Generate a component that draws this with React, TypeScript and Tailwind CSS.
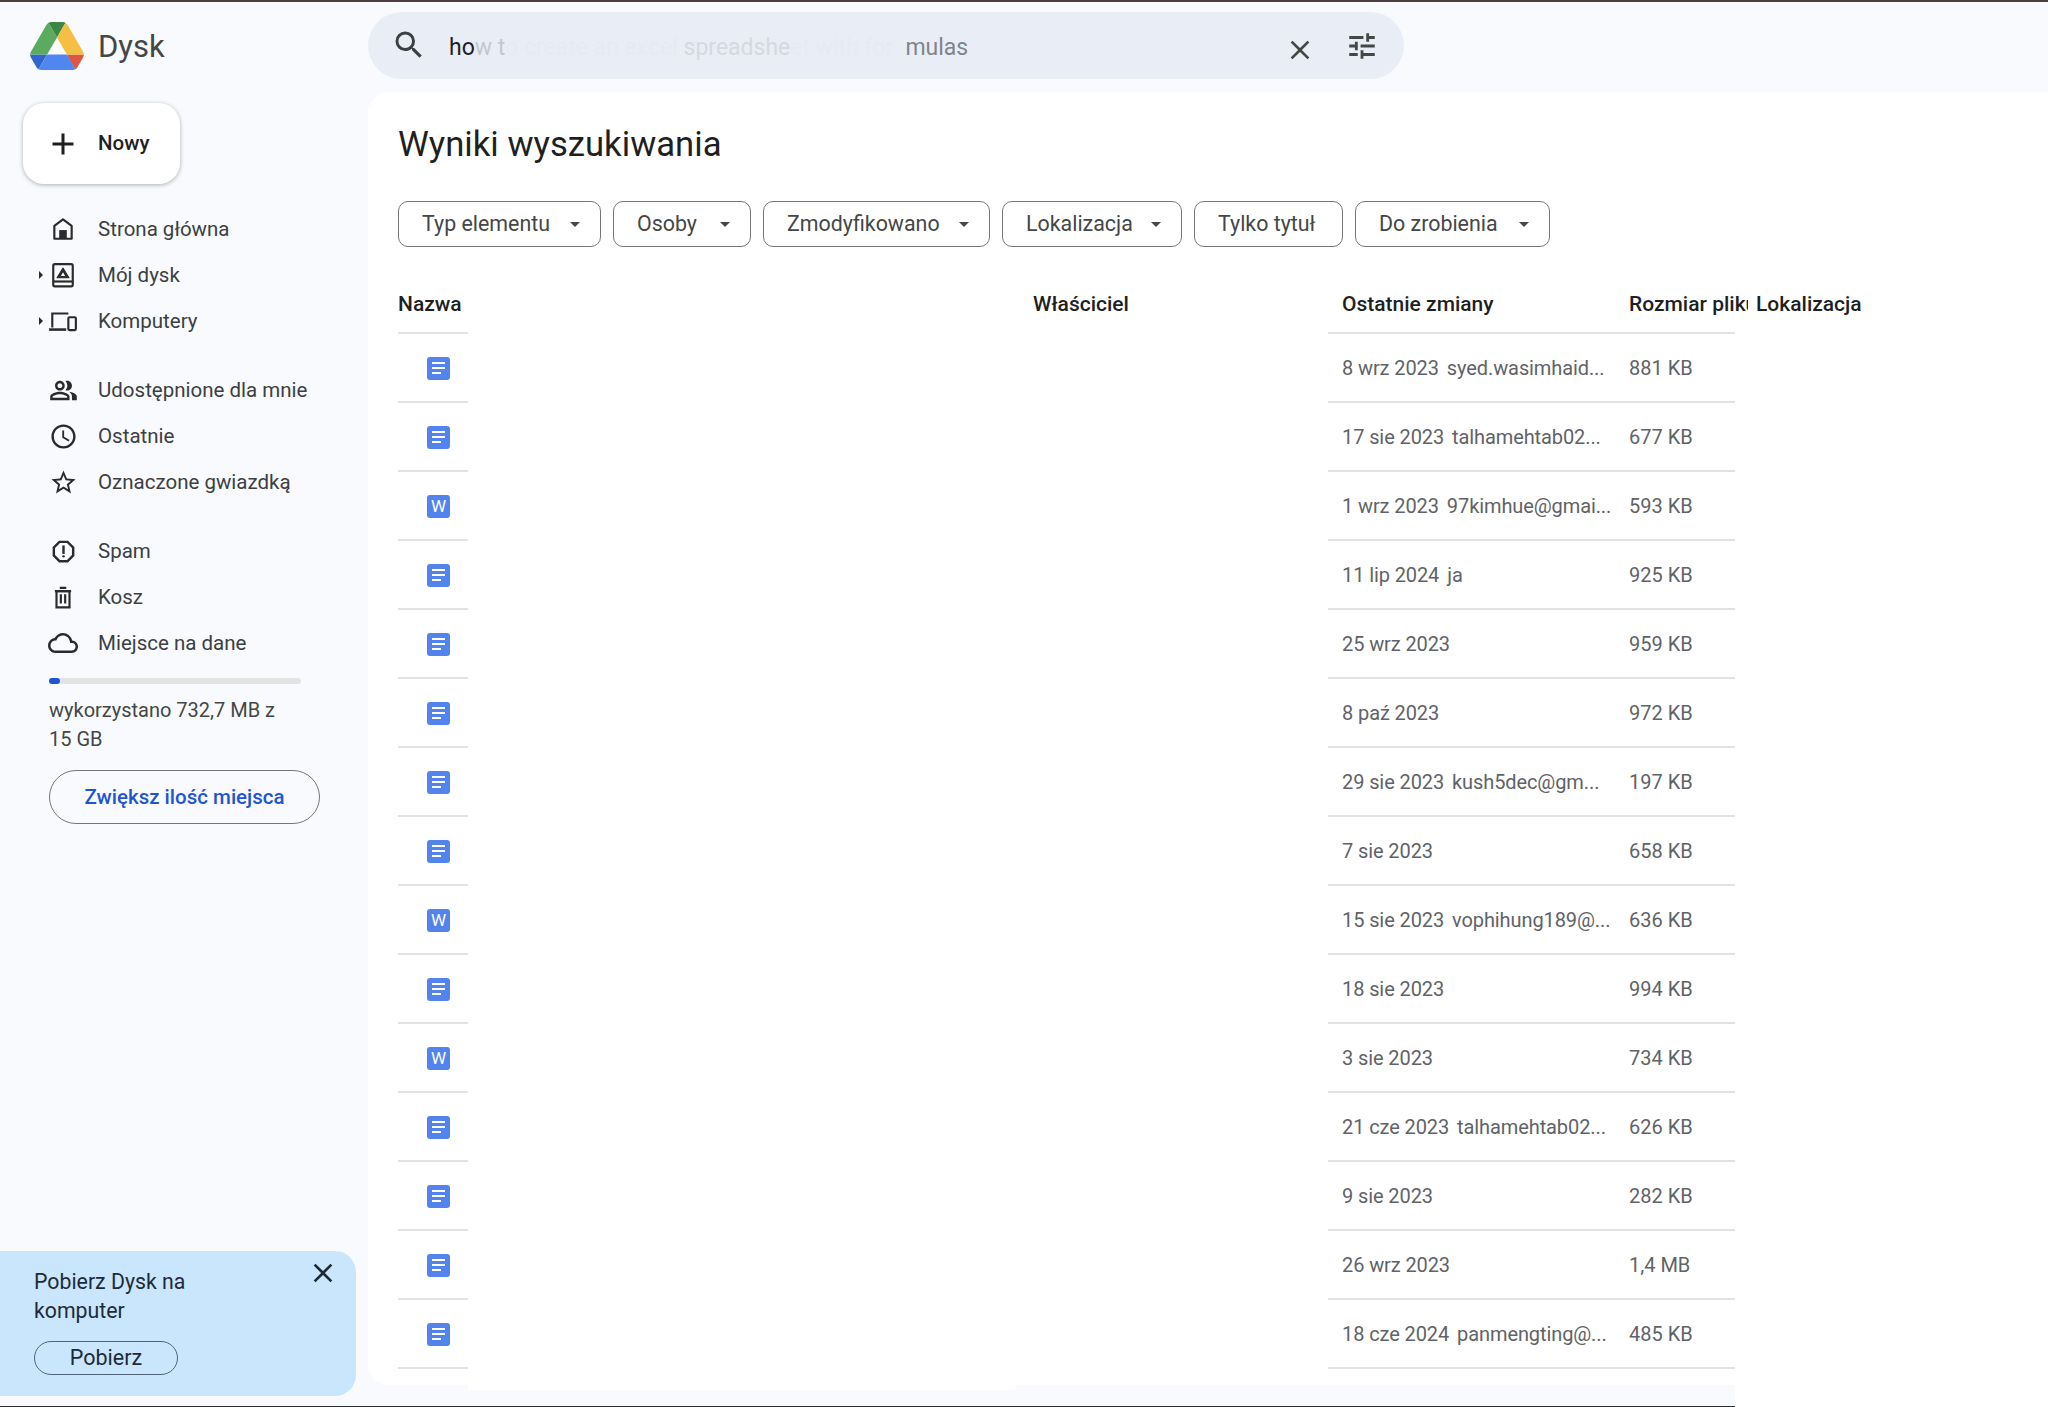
import { MdAdd, MdClose, MdOutlineAccessTime, MdOutlineCloud, MdOutlinePeopleAlt, MdOutlineReport, MdSearch, MdStarBorder, MdTune } from 'react-icons/md';
import React from 'react';

const FONT = "font-['Roboto','Liberation_Sans',sans-serif]";

const FILES = [
  { type: 'doc', date: '8 wrz 2023', owner: 'syed.wasimhaid...', size: '881 KB' },
  { type: 'doc', date: '17 sie 2023', owner: 'talhamehtab02...', size: '677 KB' },
  { type: 'word', date: '1 wrz 2023', owner: '97kimhue@gmai...', size: '593 KB' },
  { type: 'doc', date: '11 lip 2024', owner: 'ja', size: '925 KB' },
  { type: 'doc', date: '25 wrz 2023', owner: '', size: '959 KB' },
  { type: 'doc', date: '8 paź 2023', owner: '', size: '972 KB' },
  { type: 'doc', date: '29 sie 2023', owner: 'kush5dec@gm...', size: '197 KB' },
  { type: 'doc', date: '7 sie 2023', owner: '', size: '658 KB' },
  { type: 'word', date: '15 sie 2023', owner: 'vophihung189@...', size: '636 KB' },
  { type: 'doc', date: '18 sie 2023', owner: '', size: '994 KB' },
  { type: 'word', date: '3 sie 2023', owner: '', size: '734 KB' },
  { type: 'doc', date: '21 cze 2023', owner: 'talhamehtab02...', size: '626 KB' },
  { type: 'doc', date: '9 sie 2023', owner: '', size: '282 KB' },
  { type: 'doc', date: '26 wrz 2023', owner: '', size: '1,4 MB' },
  { type: 'doc', date: '18 cze 2024', owner: 'panmengting@...', size: '485 KB' },
];

const CHIPS = [
  { label: 'Typ elementu', w: 'w-[203px]', arrow: true },
  { label: 'Osoby', w: 'w-[138px]', arrow: true },
  { label: 'Zmodyfikowano', w: 'w-[227px]', arrow: true },
  { label: 'Lokalizacja', w: 'w-[180px]', arrow: true },
  { label: 'Tylko tytuł', w: 'w-[149px]', arrow: false },
  { label: 'Do zrobienia', w: 'w-[195px]', arrow: true },
];

function DriveLogo() {
  return (
    <svg width="54" height="48" viewBox="0 0 87.3 78">
      <path d="m6.6 66.85 3.85 6.65c.8 1.4 1.95 2.5 3.3 3.3l13.75-23.8h-27.5c0 1.55.4 3.1 1.2 4.5z" fill="#3065d0" />
      <path d="m43.65 25-13.75-23.8c-1.35.8-2.5 1.9-3.3 3.3l-25.4 44a9.06 9.06 0 0 0 -1.2 4.5h27.5z" fill="#5aab5f" />
      <path d="m73.55 76.8c1.35-.8 2.5-1.9 3.3-3.3l1.6-2.75 7.65-13.25c.8-1.4 1.2-2.95 1.2-4.5h-27.502l5.852 11.5z" fill="#de5642" />
      <path d="m43.65 25 13.75-23.8c-1.35-.8-2.9-1.2-4.5-1.2h-18.5c-1.6 0-3.15.45-4.5 1.2z" fill="#3b8746" />
      <path d="m59.8 53h-32.3l-13.75 23.8c1.35.8 2.9 1.2 4.5 1.2h50.8c1.6 0 3.15-.45 4.5-1.2z" fill="#5086f0" />
      <path d="m73.4 26.5-12.7-22c-.8-1.4-1.95-2.5-3.3-3.3l-13.75 23.8 16.15 28h27.45c0-1.55-.4-3.1-1.2-4.5z" fill="#f4bf42" />
    </svg>
  );
}

function HomeIcon() {
  return (
    <svg width="26" height="26" viewBox="0 0 24 24" fill="none">
      <path d="M12 3.2 4 9.2V21h16V9.2z" stroke="#2b2b2b" strokeWidth="2" strokeLinejoin="round" />
      <rect x="8.5" y="13" width="7" height="8" fill="#2b2b2b" />
    </svg>
  );
}

function MyDriveIcon() {
  return (
    <svg width="26" height="26" viewBox="0 0 24 24" fill="none">
      <rect x="3" y="2" width="18" height="20.5" rx="1.5" stroke="#2b2b2b" strokeWidth="2" />
      <path d="M3 18h18" stroke="#2b2b2b" strokeWidth="2" />
      <path d="M12 5.5 6.5 14.5h11z" fill="#2b2b2b" stroke="#2b2b2b" strokeLinejoin="round" />
      <path d="M12 9.5 10 13h4z" fill="#f8fafd" />
    </svg>
  );
}

function ComputersIcon() {
  return (
    <svg width="30" height="26" viewBox="0 0 28 24" fill="none">
      <path d="M4 18V5h15" stroke="#2b2b2b" strokeWidth="2" />
      <path d="M1 20h16" stroke="#2b2b2b" strokeWidth="2.4" />
      <rect x="19" y="8.5" width="7" height="12" rx="1" stroke="#2b2b2b" strokeWidth="2" />
    </svg>
  );
}

function TrashIcon() {
  return (
    <svg width="26" height="26" viewBox="0 0 24 24" fill="none">
      <path d="M4.5 6.5h15M9 3.5h6" stroke="#2b2b2b" strokeWidth="2" />
      <path d="M6 6.5h12V21.5H6z" stroke="#2b2b2b" strokeWidth="2" />
      <path d="M10 9.5v8.5M14 9.5v8.5" stroke="#2b2b2b" strokeWidth="2" />
    </svg>
  );
}

function Caret() {
  return <span className="w-0 h-0 border-x-[5px] border-x-transparent border-t-[5px] border-t-[#444746]" />;
}

function NavItem({ icon, label, caret, className = '' }: { icon: React.ReactNode; label: string; caret?: boolean; className?: string }) {
  return (
    <div className={`flex items-center h-[46px] ${className}`}>
      <span className="w-[48px] pl-[39px] shrink-0 flex">
        {caret && <span className="w-0 h-0 border-y-[4px] border-y-transparent border-l-[4px] border-l-[#2b2b2b]" />}
      </span>
      <span className="w-[30px] flex items-center justify-center shrink-0 text-[#2b2b2b]">{icon}</span>
      <span className="ml-[20px] text-[20.5px] text-[#3c4043]">{label}</span>
    </div>
  );
}

function FileIcon({ type }: { type: string }) {
  if (type === 'word') {
    return (
      <span className="mt-[1px] w-[23px] h-[23px] rounded-[3px] bg-[#5383ec] flex items-center justify-center text-white text-[17px] leading-none">W</span>
    );
  }
  return (
    <span className="mt-[1px] w-[23px] h-[23px] rounded-[3px] bg-[#5383ec] flex flex-col justify-center gap-[2.5px] pl-[5px]">
      <span className="block w-[13px] h-[2.5px] bg-white" />
      <span className="block w-[13px] h-[2.5px] bg-white" />
      <span className="block w-[9px] h-[2.5px] bg-white" />
    </span>
  );
}

export default function App() {
  return (
    <div className={`w-[2048px] h-[1407px] bg-[#f8fafd] flex flex-col overflow-hidden ${FONT}`}>
      <div className="h-0.5 bg-[#4a3f3c] shrink-0" />

      {/* Top bar */}
      <header className="h-[90px] flex shrink-0">
        <div className="w-[368px] flex items-start pt-[20px] pl-[30px]">
          <DriveLogo />
          <span className="ml-[14px] mt-[1px] text-[31px] leading-[48px] text-[#444746]">Dysk</span>
        </div>
        <div className="w-[1036px] h-[67px] mt-[10px] rounded-full bg-[#e9eef6] flex items-center">
          <MdSearch className="ml-[23px] -mt-[2px] text-[#3c4043] shrink-0" size={36} />
          <span className="ml-[22px] mt-[5px] w-[545px] text-[23px] whitespace-nowrap text-[#e6ebf3] overflow-hidden">
            <span className="text-[#1f1f1f]">ho</span>
            <span className="text-[#c3c8d0]">w t</span>
            <span>o create an excel </span>
            <span className="text-[#d4d9e0]">spreadshe</span>
            <span>et with for</span>
            <span className="ml-[12px] text-[#80858b]">mulas</span>
          </span>
          <MdClose className="ml-auto mt-[8px] text-[#444746]" size={32} />
          <MdTune className="ml-[29px] mr-[25px] text-[#444746]" size={34} />
        </div>
      </header>

      {/* Body */}
      <div className="flex flex-1 min-h-0">
        <aside className="w-[368px] shrink-0 flex flex-col">
          <div className="ml-[23px] mt-[11px] w-[157px] h-[81px] rounded-[21px] bg-white shadow-[0_1px_4px_rgba(60,64,67,0.4)] flex items-center pl-[22px]">
            <MdAdd className="text-[#1f1f1f]" size={36} />
            <span className="ml-[17px] text-[20.5px] font-medium text-[#1f1f1f]">Nowy</span>
          </div>
          <nav className="mt-[22px]">
            <NavItem icon={<HomeIcon />} label="Strona główna" />
            <NavItem icon={<MyDriveIcon />} label="Mój dysk" caret />
            <NavItem icon={<ComputersIcon />} label="Komputery" caret />
            <NavItem icon={<MdOutlinePeopleAlt size={29} />} label="Udostępnione dla mnie" className="mt-[23px]" />
            <NavItem icon={<MdOutlineAccessTime size={29} />} label="Ostatnie" />
            <NavItem icon={<MdStarBorder size={29} />} label="Oznaczone gwiazdką" />
            <NavItem icon={<MdOutlineReport size={29} />} label="Spam" className="mt-[23px]" />
            <NavItem icon={<TrashIcon />} label="Kosz" />
            <NavItem icon={<MdOutlineCloud size={32} />} label="Miejsce na dane" />
          </nav>
          <div className="ml-[49px] mt-[12px] w-[252px] h-[6px] rounded-full bg-[#e3e3e3] flex">
            <div className="w-[11px] h-[6px] rounded-full bg-[#1f55d0]" />
          </div>
          <p className="ml-[49px] mt-[12px] w-[250px] text-[20px] leading-[28.5px] text-[#444746]">wykorzystano 732,7 MB z 15 GB</p>
          <div className="ml-[49px] mt-[17px] w-[271px] h-[54px] rounded-full border border-[#747775] flex items-center justify-center text-[20.5px] font-medium text-[#1f55d0]">
            Zwiększ ilość miejsca
          </div>
          <div className="mt-auto mb-[10px] w-[356px] h-[145px] rounded-r-[21px] bg-[#c9e6fc] flex flex-col relative pl-[34px] pt-[17px]">
            <p className="w-[210px] text-[21.3px] leading-[28.5px] text-[#1f2a38]">Pobierz Dysk na komputer</p>
            <div className="mt-[16px] w-[144px] h-[34px] rounded-full border-[1.5px] border-[#4f6478] flex items-center justify-center text-[21.5px] text-[#1f2a38]">Pobierz</div>
            <MdClose className="absolute top-[6px] right-[17px] text-[#1f2a38]" size={32} />
          </div>
        </aside>

        <div className="flex-1 flex flex-col min-w-0">
          <main className="h-[1293px] bg-white rounded-l-[21px] pl-[30px] overflow-hidden shrink-0">
            <h1 className="mt-[27px] h-[50px] leading-[50px] text-[34.7px] text-[#1f1f1f]">Wyniki wyszukiwania</h1>
            <div className="mt-[32px] flex gap-[12px]">
              {CHIPS.map(chip => (
                <div key={chip.label} className={`${chip.w} h-[46px] rounded-[10px] border border-[#747775] flex items-center pl-[23px] pr-[20px] text-[21.4px] text-[#444746]`}>
                  <span>{chip.label}</span>
                  {chip.arrow && <span className="ml-auto flex"><Caret /></span>}
                </div>
              ))}
            </div>

            {/* Table header */}
            <div className="flex h-[87px] text-[21px] font-medium text-[#1f1f1f]">
              <div className="w-[70px] shrink-0 border-b-2 border-[#e3e3e3] pt-[31px] flex items-center whitespace-nowrap">Nazwa</div>
              <div className="w-[860px] shrink-0 border-b-2 border-transparent pt-[31px] pl-[565px] flex items-center">Właściciel</div>
              <div className="w-[407px] shrink-0 border-b-2 border-[#e3e3e3] pt-[31px] pl-[14px] flex items-center whitespace-nowrap">
                <span className="w-[287px] shrink-0">Ostatnie zmiany</span>
                <span className="w-[119px] shrink-0 overflow-hidden">Rozmiar pliku</span>
                <span className="ml-[8px] shrink-0">Lokalizacja</span>
              </div>
            </div>

            {/* Rows */}
            {FILES.map(file => (
              <div key={file.date + file.size} className="flex h-[69px] text-[20px] text-[#5f6368]">
                <div className="w-[70px] shrink-0 border-b-2 border-[#e3e3e3] flex items-center justify-center pl-[11px]">
                  <FileIcon type={file.type} />
                </div>
                <div className="w-[860px] shrink-0" />
                <div className="w-[407px] shrink-0 border-b-2 border-[#e3e3e3] pl-[14px] flex items-center whitespace-nowrap">
                  <span className="w-[287px] shrink-0 overflow-hidden tracking-[-0.1px]">
                    {file.date}
                    <span className="ml-[8px]">{file.owner}</span>
                  </span>
                  <span>{file.size}</span>
                </div>
              </div>
            ))}
          </main>

          <div className="flex flex-1">
            <div className="w-[100px] shrink-0" />
            <div className="w-[548px] h-[5px] bg-white shrink-0" />
            <div className="w-[719px] shrink-0" />
            <div className="flex-1 bg-white" />
          </div>
        </div>
      </div>

      <div className="flex h-px shrink-0">
        <div className="w-[1735px] bg-[#2b2d30]" />
        <div className="flex-1 bg-white" />
      </div>
    </div>
  );
}
